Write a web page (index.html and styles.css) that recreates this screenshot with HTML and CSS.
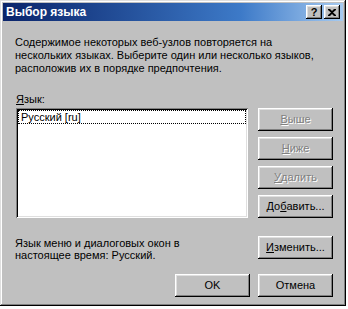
FILE: index.html
```html
<!DOCTYPE html>
<html>
<head>
	<meta charset="UTF-8">
	<title>Выбор языка</title>
<link rel="stylesheet" href="styles.css">
</head>
<body>
<div class="window">
	<div class="titlebar">
		<span class="title">Выбор языка</span>
		<div class="title-buttons">
			<div class="tbtn help">?</div>
			<div class="tbtn close">
				<svg width="8" height="7" viewBox="0 0 8 7"><path d="M0 0h2l2 2 2-2h2v1L5 3.5 8 6v1H6L4 5 2 7H0V6l3-2.5L0 1z" fill="#000"/></svg>
			</div>
		</div>
	</div>
	<div class="content">
		<p class="intro">Содержимое некоторых веб-узлов повторяется на<br>нескольких языках. Выберите один или несколько языков,<br>расположив их в порядке предпочтения.</p>
		<div class="label"><u>Я</u>зык:</div>
		<div class="list-row">
			<div class="listbox">
				<div class="item">Русский [ru]</div>
			</div>
			<div class="side-buttons">
				<div class="btn disabled"><u>В</u>ыше</div>
				<div class="btn disabled"><u>Н</u>иже</div>
				<div class="btn disabled"><u>У</u>далить</div>
				<div class="btn">До<u>б</u>авить...</div>
			</div>
		</div>
		<div class="ui-row">
			<p class="ui-text">Язык меню и диалоговых окон в<br>настоящее время: Русский.</p>
			<div class="btn"><u>И</u>зменить...</div>
		</div>
		<div class="footer">
			<div class="btn">OK</div>
			<div class="btn">Отмена</div>
		</div>
	</div>
</div>
</body>
</html>
```

FILE: styles.css
```css
*{
	box-sizing: border-box;
}
body{
	margin: 0;
	background: #fff;
	font-family: "Liberation Sans", Arial, sans-serif;
	font-size: 11px;
	color: #000;
}
.window{
	width: 346px;
	height: 306px;
	background: #c0c0c0;
	padding: 3px;
	box-shadow: inset -1px -1px #000, inset 1px 1px #dfdfdf, inset -2px -2px #808080, inset 2px 2px #fff;
	display: flex;
	flex-direction: column;
}
.titlebar{
	height: 18px;
	background: linear-gradient(to right, #0a246a, #3d7ac8 70%, #a6caf0);
	display: flex;
	align-items: center;
	justify-content: space-between;
	padding: 0 3px 0 3px;
}
.title{
	color: #fff;
	font-weight: bold;
	font-size: 12px;
}
.title-buttons{
	display: flex;
	gap: 2px;
}
.tbtn{
	width: 16px;
	height: 14px;
	background: #c0c0c0;
	box-shadow: inset -1px -1px #000, inset 1px 1px #fff, inset -2px -2px #808080, inset 2px 2px #dfdfdf;
	display: flex;
	align-items: center;
	justify-content: center;
	font-weight: bold;
	font-size: 11px;
	line-height: 14px;
}
.content{
	flex: 1;
	padding: 15px 10px 0 12px;
	display: flex;
	flex-direction: column;
}
.intro{
	margin: 0;
	line-height: 13px;
	width: 320px;
}
.label{
	margin-top: 18px;
	line-height: 13px;
	padding-left: 1px;
}
.list-row{
	display: flex;
	justify-content: space-between;
	margin-top: 2px;
}
.listbox{
	width: 232px;
	height: 110px;
	background: #fff;
	padding: 2px 1px;
	margin-left: 1px;
	box-shadow: inset 1px 1px #808080, inset -1px -1px #fff, inset 2px 2px #000, inset -2px -2px #dfdfdf;
}
.item{
	border: 1px dotted #000;
	height: 14px;
	line-height: 12px;
	padding-left: 2px;
	margin-left: 1px;
	margin-right: 1px;
}
.side-buttons{
	display: flex;
	flex-direction: column;
	gap: 6px;
}
.btn{
	width: 75px;
	height: 23px;
	background: #c0c0c0;
	box-shadow: inset -1px -1px #000, inset 1px 1px #fff, inset -2px -2px #808080, inset 2px 2px #dfdfdf;
	display: flex;
	align-items: center;
	justify-content: center;
	padding-bottom: 1px;
}
.btn.disabled{
	color: #808080;
	text-shadow: 1px 1px #fff;
}
.ui-row{
	display: flex;
	justify-content: space-between;
	align-items: flex-start;
	margin-top: 18px;
}
.ui-text{
	margin: 0;
	line-height: 12px;
	width: 200px;
	padding-top: 1px;
}
.footer{
	display: flex;
	justify-content: flex-end;
	gap: 8px;
	margin-top: 13px;
}
```
